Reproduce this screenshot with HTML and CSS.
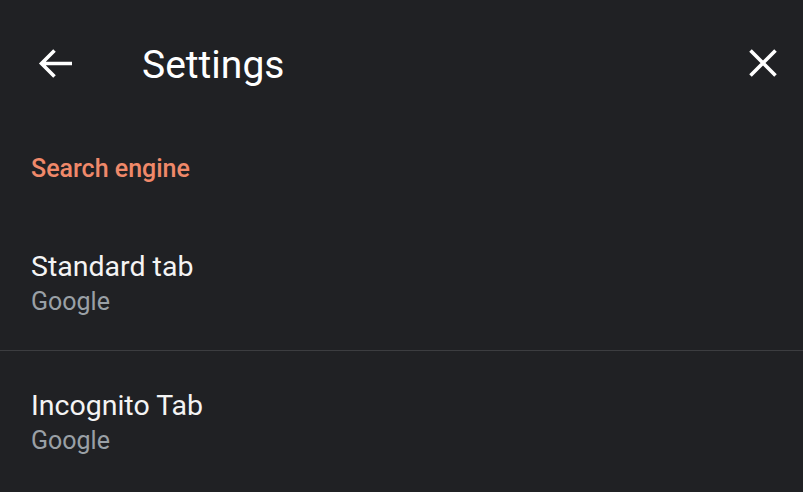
FILE: index.html
```html
<!DOCTYPE html>
<html>
<head>
<meta charset="utf-8">
<link rel="stylesheet" href="styles.css">
</head>
<body>
<div class="app">
  <header class="toolbar">
    <button class="icon-btn back" aria-label="Back">
      <svg width="40" height="40" viewBox="0 0 40 40"><path d="M37 18.5H6.5M19.5 5.5L6.5 18.5L19.5 31.5" fill="none" stroke="#fff" stroke-width="3.6"/></svg>
    </button>
    <h1 class="title">Settings</h1>
    <button class="icon-btn close" aria-label="Close">
      <svg width="40" height="40" viewBox="0 0 40 40"><path d="M7.5 5.5L32.5 30.5M32.5 5.5L7.5 30.5" fill="none" stroke="#fff" stroke-width="3.6"/></svg>
    </button>
  </header>
  <div class="section-title">Search engine</div>
  <div class="item">
    <div class="item-title">Standard tab</div>
    <div class="item-sub">Google</div>
  </div>
  <div class="divider"></div>
  <div class="item">
    <div class="item-title">Incognito Tab</div>
    <div class="item-sub">Google</div>
  </div>
</div>
</body>
</html>
```
FILE: styles.css
```css
html, body {
  margin: 0;
  padding: 0;
  background: #202124;
  font-family: Roboto, "Noto Sans", sans-serif;
  color: #e8eaed;
}
.app {
  width: 803px;
  height: 492px;
  overflow: hidden;
}
.toolbar {
  display: flex;
  align-items: center;
  height: 130px;
  padding: 0 20px 0 35px;
}
.icon-btn {
  background: none;
  border: none;
  padding: 0;
  width: 40px;
  height: 40px;
  display: flex;
  cursor: pointer;
}
.title {
  flex: 1;
  margin: 0 0 0 67px;
  font-size: 39px;
  line-height: 48px;
  font-weight: 400;
  color: #fff;
}
.section-title {
  padding: 23.5px 31px 28.5px;
  font-size: 25px;
  line-height: 30px;
  font-weight: 500;
  color: #f0896a;
}
.item {
  padding: 37.5px 31px 33.5px;
}
.item-title {
  font-size: 28.5px;
  color: #f4f4f4;
  line-height: 34px;
}
.item-sub {
  margin-top: 3px;
  font-size: 25px;
  color: #9aa0a6;
  line-height: 30px;
}
.divider {
  height: 1px;
  background: #3c3d40;
}
```
